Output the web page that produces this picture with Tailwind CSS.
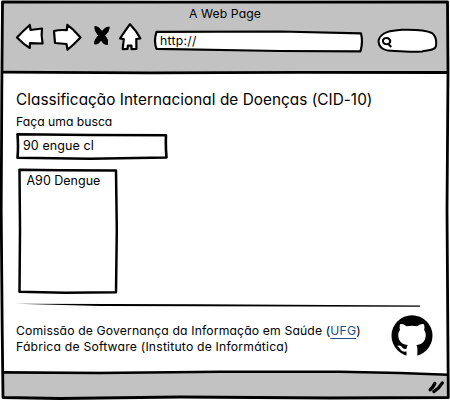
<!DOCTYPE html>
<html lang="pt-BR">
<head>
<meta charset="utf-8">
<title>A Web Page</title>
<script src="https://cdn.jsdelivr.net/npm/@tailwindcss/browser@4"></script>
</head>
<body class="bg-white">
<div class="relative isolate flex h-[401px] w-[450px] flex-col overflow-hidden text-black font-['Inter','Liberation_Sans',sans-serif] [font-feature-settings:'cv11']">
  <!-- hand-drawn window frame -->
  <svg class="absolute inset-0 -z-10" width="450" height="401" viewBox="0 0 450 401" fill="none" stroke="#000" stroke-linejoin="round">
    <path d="M2 2H448V72H3Z" fill="#c2c2c2" stroke="none"/>
    <path d="M2.5 372L150 371.5 350 371.5 448 375V398L180 397 3 397.5Z" fill="#c2c2c2" stroke="none"/>
    <path d="M2.5 2L160 2.2 447.5 1.8 448 72 447 210 448.3 397.5 330 398 180 397 60 398.5 3 397.5 2.2 330 1.2 210 1.8 90Z" stroke-width="2.8"/>
    <path d="M2 72.2L150 72.8 300 72.3 448 72.5" stroke-width="2.8"/>
    <path d="M2.5 372.4L100 373 220 371.8 340 371.8 400 373 448 374.7" stroke-width="2.6"/>
  </svg>

  <header class="h-[73px] shrink-0">
    <h1 class="pt-[6px] text-center text-[12.2px] leading-4 tracking-[0.1px]">A Web Page</h1>
    <div class="flex items-start pl-[15px]">
      <svg class="shrink-0" width="29" height="32" viewBox="15 22 29 32" fill="#fff" stroke="#000" stroke-width="2.2" stroke-linejoin="round"><path d="M17 37.500Q23 31 29.800 25L30.600 30 42 28.500Q41 35 42.600 43.500L30 43.200 29.800 48Q23 44 17 37.500Z"/></svg>
      <svg class="ml-2 shrink-0" width="31" height="32" viewBox="52 22 31 32" fill="#fff" stroke="#000" stroke-width="2.2" stroke-linejoin="round"><path d="M54 31Q60 29.500 66.800 30.200L67.300 24.800 73 29.500 80.500 37.500 74 44 67.500 49.800 66.500 44 55 43Q54.500 37 54 31Z"/></svg>
      <svg class="ml-[9px] shrink-0" width="20" height="32" viewBox="92 22 20 32" stroke="#000" stroke-linejoin="round"><path d="M94.800 26.500Q98.500 26 102 31.500Q105.500 26.500 109.300 27Q109.500 31 104.800 35.500Q108.800 40 107.500 44.500Q103.500 45 101 40Q98.500 45 94.500 44Q94 40 98.500 35.500Q94.300 30.500 94.800 26.500Z"/></svg>
      <svg class="ml-[5px] shrink-0" width="27" height="32" viewBox="117 22 27 32" fill="#fff" stroke="#000" stroke-width="2.2" stroke-linejoin="round"><path d="M130 24.200Q125 31 120 38.500L123.800 39.200 122.700 49.200 127.500 48.800 127.800 45.600 131.400 45.600 131.600 49.200 136.400 49 136.300 39 140.400 38.400Q136.500 31 130 24.200Z"/></svg>
      <div class="relative isolate ml-[9px] mt-[7px] h-6 w-[211px] shrink-0 pl-[7px] pt-[4px] text-[12.2px] leading-4 tracking-[0.3px]">
        <svg class="absolute inset-0 -z-10" width="211" height="24" viewBox="153 29 211 24" fill="#fff" stroke="#000" stroke-width="2.200" stroke-linejoin="round"><path d="M156.500 31.800L280 31.500 361 33.400Q363.200 42 360.500 51.300L280 51 156.500 48.800Q153.500 41 156.500 31.800Z"/></svg>
        http://
      </div>
      <svg class="ml-3 mt-[5px] shrink-0" width="62" height="28" viewBox="376 27 62 28" fill="#fff" stroke="#000" stroke-width="2" stroke-linejoin="round"><path d="M388 50.600C381 49 378 45 378.700 40C381 32 391 30.500 402 29.800C413 29.500 426 30.200 432 33C436 36 436.500 42 436 46C435 50 430 50 422 51.400C412 52.500 400 51.300 388 50.600Z"/><path d="M383 40Q384 37.700 388 38.200Q391 40 390 42.500Q388 45 384.500 43.800Q382.500 42.500 383 40ZM388.500 44.300L391.300 47"/></svg>
    </div>
  </header>

  <main class="flex h-[300px] shrink-0 flex-col pl-4 pt-[17px]">
    <h2 class="whitespace-nowrap text-[15.3px] leading-5 tracking-[0.05px]">Classificação Internacional de Doenças (CID-10)</h2>
    <div class="mt-1 text-[12.200px] leading-4">Faça uma busca</div>
    <div class="relative isolate mt-[3px] h-[27px] w-[152px] pl-[7px] pt-[5px] text-[12.500px] leading-4 tracking-[0.1px]">
      <svg class="absolute inset-0 -z-10" width="152" height="27" viewBox="16 133 152 27" fill="#fff" stroke="#000" stroke-width="2.600" stroke-linejoin="round"><path d="M17.500 134.300L90 135 166 135.300Q165.500 146 166.500 157.500L90 158.700 17.500 157.800Q18.500 146 17.500 134.300Z"/></svg>
      90 engue cl
    </div>
    <div class="relative isolate ml-[2px] mt-2 h-[127px] w-[100px] pl-[8.5px] pt-[5px] text-[12.500px] leading-4">
      <svg class="absolute inset-0 -z-10" width="100" height="127" viewBox="18 168 100 127" fill="#fff" stroke="#000" stroke-width="2.500" stroke-linejoin="round"><path d="M19.500 169.700L60 170.200 116 170.500 116.800 230 116 292.200 65 292.800 19.500 291.800 20 230Z"/></svg>
      A90 Dengue
    </div>
    <svg class="mt-2 shrink-0" width="404" height="5" viewBox="16 303 404 5"><path d="M16 303.700L200 304.200 420 305.600V306.800L300 306.500 100 306Z"/></svg>
    <div class="flex pt-[6px]">
      <p class="w-[375px] whitespace-nowrap pt-[8.500px] text-[12.200px] leading-4">
        <span class="tracking-[0.140px]">Comissão de Governança da Informação em Saúde (<a class="text-[#214c84] underline underline-offset-[3px]">UFG</a>)</span><br>
        <span class="tracking-[0.200px]">Fábrica de Software (Instituto de Informática)</span>
      </p>
      <!-- GitHub mark -->
      <svg class="mt-px shrink-0" width="42" height="42" viewBox="0 0 42 42">
        <circle cx="21" cy="20.700" r="20.500"/>
        <path fill="#fff" d="M9 9.200Q12.500 8.600 15.600 11.300Q21 10.200 26.200 11.300Q29.500 8.600 33 9.200Q34 12 33.200 15Q35 17.500 34.700 21C34.300 27 30.500 29.300 25.400 30Q26.400 31.500 26.400 34V42H15.500V36.500C10.500 37.300 9.500 34.500 8.300 32.800Q7.300 31.500 6.200 30.900Q9.500 29.700 11.800 33Q13.200 34.700 15.600 33.800Q15.700 31.200 16.900 30C11.500 29.300 7.700 27 7.300 21Q7 17.500 8.900 15Q8.200 12 9 9.200Z"/>
      </svg>
    </div>
  </main>

  <footer class="flex h-7 justify-end pr-[5px] pt-[6px]">
    <svg width="18" height="16" viewBox="427 379 18 16" stroke="#000" stroke-width="3.400" stroke-linecap="round" fill="none"><path d="M430.200 389.800Q433 387.500 434.800 383.500M433.900 391.500Q439 388.500 442.300 383"/></svg>
  </footer>
</div>
</body>
</html>
